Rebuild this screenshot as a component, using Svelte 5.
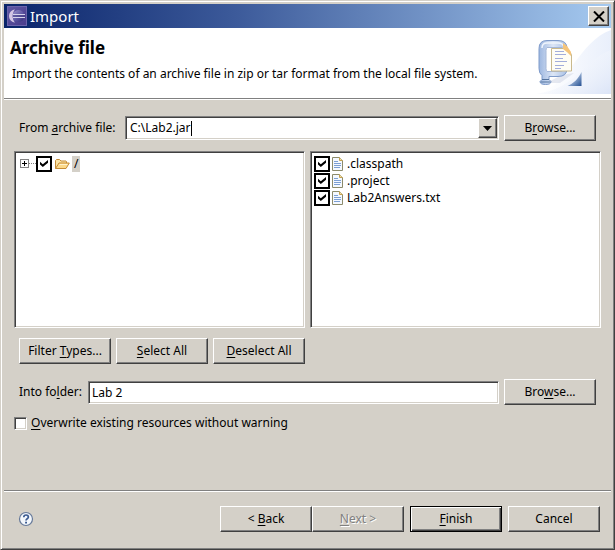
<script>
	let archivePath = $state('C:\\Lab2.jar');
	let folder = $state('Lab 2');
	let overwrite = $state(false);
	let rootChecked = $state(true);

	let files = $state([
		{ name: '.classpath', checked: true },
		{ name: '.project', checked: true },
		{ name: 'Lab2Answers.txt', checked: true }
	]);

	function setAll(value) {
		rootChecked = value;
		for (const file of files) file.checked = value;
	}
</script>

<main class="window">
	<header class="title-bar">
		<svg class="app-icon" width="20" height="20" viewBox="0 0 20 20" aria-hidden="true">
			<defs>
				<linearGradient id="app-bg" x1="0" y1="0" x2="1" y2="1">
					<stop offset="0" stop-color="#5f58a4" />
					<stop offset="1" stop-color="#4a3c8c" />
				</linearGradient>
				<linearGradient id="app-ball" x1="0" y1="0" x2="1" y2="1">
					<stop offset="0" stop-color="#9c95cc" />
					<stop offset="0.6" stop-color="#57519e" />
					<stop offset="1" stop-color="#2f2b70" />
				</linearGradient>
			</defs>
			<rect x="0.5" y="0.5" width="19" height="19" fill="url(#app-bg)" stroke="#6c64ac" />
			<path d="M8 3.500C4 4 2 7 2 10s2 6 6 6.500c-3-3-3-10 0-13z" fill="#d3c6e4" />
			<circle cx="11.500" cy="10" r="6" fill="url(#app-ball)" />
			<path d="M6 8.500h12M6 11.500h12" stroke="#d6d4ec" />
			<path d="M6 10h12" stroke="#4a4489" />
		</svg>
		<h1>Import</h1>
		<button class="close" aria-label="Close">
			<svg width="12" height="11" viewBox="0 0 12 11" aria-hidden="true">
				<path d="M1 0.500L11 10.500M11 0.500L1 10.500" stroke="#000" stroke-width="2" />
			</svg>
		</button>
	</header>

	<section class="banner">
		<div class="banner-text">
			<h2>Archive file</h2>
			<p>Import the contents of an archive file in zip or tar format from the local file system.</p>
		</div>
		<svg class="banner-art" width="75" height="70" viewBox="0 0 75 70" aria-hidden="true">
			<defs>
				<linearGradient id="sweep" x1="0" y1="0" x2="1" y2="0">
					<stop offset="0.1" stop-color="#ffffff" />
					<stop offset="1" stop-color="#e9effb" />
				</linearGradient>
				<linearGradient id="sweep-low" x1="0" y1="0" x2="1" y2="1">
					<stop offset="0.2" stop-color="#ffffff" stop-opacity="0" />
					<stop offset="1" stop-color="#dbe4f7" />
				</linearGradient>
				<linearGradient id="clamp" x1="0" y1="0" x2="1" y2="0">
					<stop offset="0" stop-color="#9db7e0" />
					<stop offset="0.5" stop-color="#dce6f6" />
					<stop offset="1" stop-color="#a9c0e4" />
				</linearGradient>
				<linearGradient id="corner" x1="0" y1="0" x2="1" y2="1">
					<stop offset="0.300" stop-color="#c2d3ec" />
					<stop offset="1" stop-color="#234f91" />
				</linearGradient>
			</defs>
			<path d="M0 66C34 58 42 14 75 2V66z" fill="url(#sweep)" />
			<path d="M0 66C42 60 50 30 75 22V66z" fill="url(#sweep-low)" />
			<path d="M10 55l16-8 12-2-14 10z" fill="#d4d9e6" opacity="0.6" />
			<path
				d="M11 12.500h11q9 0 9 8v20q0 8-9 8H13v3l2 2q0 3-5.500 3T4 53.500l2-2v-4q-3-2-3-7v-20q0-8 8-8z"
				fill="url(#clamp)"
				stroke="#7f9bca"
			/>
			<path d="M6 20q0-5 5-5h11q5 0 6 4" fill="none" stroke="#f0f5fc" stroke-width="1.500" />
			<path d="M6 51.500h7M4.500 54h10" stroke="#55749f" />
			<path d="M11 19.500h15v24H11q-1-1-1-3v-18q0-2 1-3z" fill="#fff" stroke="#a4b7d8" />
			<path d="M15.500 20.500h16l4 6v16.500h-20z" fill="#fffdf5" stroke="#c9b98d" />
			<path d="M27 15v6l4.500 3.500L35 28v-4l-4-6z" fill="#f5c47a" />
			<path
				d="M19 23.500h9M19 26.500h11M19 30.500h8M19 33.500h12M19 37.500h9M19 40.500h6"
				stroke="#a3addb"
			/>
			<path d="M45.500 44v14H31.500c5-2 11-7 14-14z" fill="url(#corner)" />
		</svg>
	</section>

	<form class="content" onsubmit={(e) => e.preventDefault()}>
		<div class="row archive-row">
			<label for="archive">From <u>a</u>rchive file:</label>
			<div class="combo sunken">
				<input id="archive" class="combo-input" type="text" bind:value={archivePath} />
				<span class="caret"></span>
				<button type="button" class="drop" aria-label="Show recent archives">
					<svg width="9" height="5" viewBox="0 0 9 5" aria-hidden="true">
						<path d="M0 0h9L4.500 5z" fill="#000" />
					</svg>
				</button>
			</div>
			<button type="button" class="btn">B<u>r</u>owse...</button>
		</div>

		<div class="panes">
			<div class="pane sunken tree">
				<div class="item">
					<button type="button" class="expand" aria-label="Expand">
						<svg width="9" height="9" viewBox="0 0 9 9" aria-hidden="true">
							<rect x="0.500" y="0.500" width="8" height="8" fill="#fff" stroke="#848484" />
							<path d="M2 4.500h5M4.500 2v5" stroke="#000" />
						</svg>
					</button>
					<span class="dots"></span>
					<input id="root" class="tick" type="checkbox" bind:checked={rootChecked} />
					<svg class="folder" width="16" height="16" viewBox="0 0 16 16" aria-hidden="true">
						<path
							d="M1.500 12.500V4.500l1-1h3l1.500 1.500h5l.5.500v2"
							fill="#fbe3a4"
							stroke="#c58b35"
						/>
						<path d="M1.500 12.500l3.500-5.500h10.300l-3.300 5.500z" fill="#fcd98a" stroke="#c58b35" />
						<path d="M5.500 8.500h8" stroke="#fff3cf" />
					</svg>
					<label for="root" class="selected">/</label>
				</div>
			</div>
			<div class="pane sunken list">
				{#each files as file, i}
					<div class="item">
						<input id="file-{i}" class="tick" type="checkbox" bind:checked={file.checked} />
						<svg class="file" width="16" height="16" viewBox="0 0 16 16" aria-hidden="true">
							<path d="M2.500 1.500h7l3 3v10h-10z" fill="#f5f9ff" stroke="#8c8b6b" />
							<path d="M9.500 1.500v3h3" fill="#f7dfa0" stroke="#c4a14f" />
							<path d="M4 5.500h4M4 7.500h7M4 9.500h7M4 11.500h6" stroke="#7c9fd3" />
						</svg>
						<label for="file-{i}">{file.name}</label>
					</div>
				{/each}
			</div>
		</div>

		<div class="row actions">
			<button type="button" class="btn">Filter <u>T</u>ypes...</button>
			<button type="button" class="btn" onclick={() => setAll(true)}><u>S</u>elect All</button>
			<button type="button" class="btn" onclick={() => setAll(false)}><u>D</u>eselect All</button>
		</div>

		<div class="row folder-row">
			<label for="folder">Into fo<u>l</u>der:</label>
			<input id="folder" class="text-input sunken" type="text" bind:value={folder} />
			<button type="button" class="btn">Bro<u>w</u>se...</button>
		</div>

		<div class="option">
			<input id="overwrite" class="check sunken" type="checkbox" bind:checked={overwrite} />
			<label for="overwrite"><u>O</u>verwrite existing resources without warning</label>
		</div>
	</form>

	<footer>
		<button class="help" aria-label="Help">
			<svg width="16" height="16" viewBox="0 0 16 16" aria-hidden="true">
				<circle cx="8" cy="8" r="6.500" fill="#f3f7fc" stroke="#667999" stroke-width="1.200" />
				<path
					d="M5.800 6.300c0-3 4.600-3 4.600-.2C10.400 7.800 8 7.800 8 9.500"
					fill="none"
					stroke="#3b5a91"
					stroke-width="1.700"
				/>
				<path d="M7.100 10.700h1.900v1.700H7.100z" fill="#3b5a91" />
			</svg>
		</button>
		<div class="nav">
			<button class="btn">&lt; <u>B</u>ack</button>
			<button class="btn" disabled><u>N</u>ext &gt;</button>
		</div>
		<button class="btn default"><u>F</u>inish</button>
		<button class="btn">Cancel</button>
	</footer>
</main>

<style>
	:global(body) {
		margin: 0;
	}

	.window {
		background: #d4d0c8;
		border: 1px solid;
		border-color: #d4d0c8 #404040 #404040 #d4d0c8;
		box-shadow:
			inset 1px 1px #fff,
			inset -1px -1px #808080;
		box-sizing: border-box;
		color: #000;
		display: flex;
		flex-direction: column;
		font-family: 'Noto Sans', 'DejaVu Sans', sans-serif;
		font-size: 12px;
		line-height: 16px;
		min-height: 100vh;
		padding: 3px;
	}

	button,
	input {
		border-radius: 0;
		box-sizing: border-box;
		color: inherit;
		font: inherit;
		margin: 0;
		padding: 0;
	}

	u {
		text-underline-offset: 2px;
	}

	.title-bar {
		align-items: center;
		background: linear-gradient(90deg, #0a246a, #3c5a9a 38%, #a6caf0);
		display: flex;
		height: 24px;
		padding: 0 2px 0 3px;
	}

	h1 {
		color: #fff;
		flex: 1;
		font-size: 15px;
		font-weight: normal;
		line-height: 20px;
		margin: 0 0 0 3px;
	}

	.close {
		align-items: center;
		background: #d4d0c8;
		border: 1px solid;
		border-color: #fff #404040 #404040 #fff;
		box-shadow: inset -1px -1px #808080;
		display: flex;
		height: 20px;
		justify-content: center;
		width: 21px;
	}

	.banner {
		background: #fff;
		border-bottom: 1px solid #808080;
		box-shadow: 0 1px #fff;
		display: flex;
		height: 70px;
		justify-content: space-between;
	}

	.banner-text {
		padding: 10px 0 0 6px;
	}

	h2 {
		font-size: 17px;
		line-height: 20px;
		margin: 0;
	}

	p {
		margin: 8px 0 0 2px;
		white-space: nowrap;
	}

	.banner-art {
		flex: none;
	}

	.content {
		flex: 1;
		padding: 16px 10px 0;
	}

	.row {
		align-items: center;
		display: flex;
		gap: 5px;
		padding: 0 5px;
	}

	.sunken {
		background: #fff;
		border: 1px solid;
		border-color: #808080 #fff #fff #808080;
		box-shadow:
			inset 1px 1px #404040,
			inset -1px -1px #d4d0c8;
	}

	.btn {
		background: #d4d0c8;
		border: 1px solid;
		border-color: #fff #404040 #404040 #fff;
		box-shadow: inset -1px -1px #808080;
		flex: none;
		height: 26px;
		white-space: nowrap;
		width: 92px;
	}

	.btn:disabled {
		color: #808080;
		text-shadow: 1px 1px #fff;
	}

	.btn.default {
		border-color: #000;
		box-shadow:
			inset 1px 1px #fff,
			inset -1px -1px #404040,
			inset -2px -2px #808080;
	}

	.archive-row label {
		width: 101px;
		white-space: nowrap;
	}

	.combo {
		align-items: center;
		box-sizing: border-box;
		display: flex;
		flex: 1;
		height: 24px;
		padding: 1px 1px 1px 4px;
	}

	.combo-input {
		background: none;
		border: none;
		field-sizing: content;
		min-width: 0;
		outline: none;
	}

	.caret {
		background: #000;
		height: 15px;
		width: 1px;
	}

	.drop {
		align-items: center;
		background: #d4d0c8;
		border: 1px solid;
		border-color: #fff #404040 #404040 #fff;
		box-shadow: inset -1px -1px #808080;
		display: flex;
		height: 20px;
		justify-content: center;
		margin-left: auto;
		width: 19px;
	}

	.panes {
		display: flex;
		gap: 5px;
		margin-top: 10px;
	}

	.pane {
		box-sizing: border-box;
		flex: 1;
		height: 177px;
		padding: 3px;
	}

	.item {
		align-items: center;
		display: flex;
		height: 17px;
	}

	.expand {
		background: none;
		border: none;
		display: flex;
		margin-left: 2px;
	}

	.dots {
		border-top: 1px dotted #808080;
		width: 7px;
	}

	.tick {
		appearance: none;
		background: #fff;
		border: 2px solid #000;
		display: grid;
		flex: none;
		height: 16px;
		place-items: center;
		width: 16px;
	}

	.tick:checked::before,
	.check:checked::before {
		background: #000;
		clip-path: polygon(0 25%, 35% 60%, 100% 0, 100% 40%, 35% 100%, 0 65%);
		content: '';
		height: 7px;
		width: 8px;
	}

	.folder {
		margin: 0 2px;
	}

	.file {
		margin-right: 1px;
	}

	.selected {
		background: #d4d0c8;
		padding: 0 2px;
	}

	.actions {
		margin-top: 10px;
	}

	.folder-row {
		margin-top: 15px;
	}

	.folder-row label {
		white-space: nowrap;
		width: 64px;
	}

	.text-input {
		flex: 1;
		height: 23px;
		min-width: 0;
		outline: none;
		padding: 0 3px;
	}

	.option {
		align-items: center;
		display: flex;
		gap: 4px;
		margin-top: 10px;
	}

	.check {
		appearance: none;
		display: grid;
		height: 13px;
		place-items: center;
		width: 13px;
	}

	footer {
		align-items: center;
		border-top: 1px solid #808080;
		box-shadow: inset 0 1px #fff;
		display: flex;
		gap: 6px;
		padding: 15px 11px 14px 14px;
	}

	.help {
		background: none;
		border: none;
		display: flex;
		margin-right: auto;
	}

	.nav {
		display: flex;
	}
</style>
